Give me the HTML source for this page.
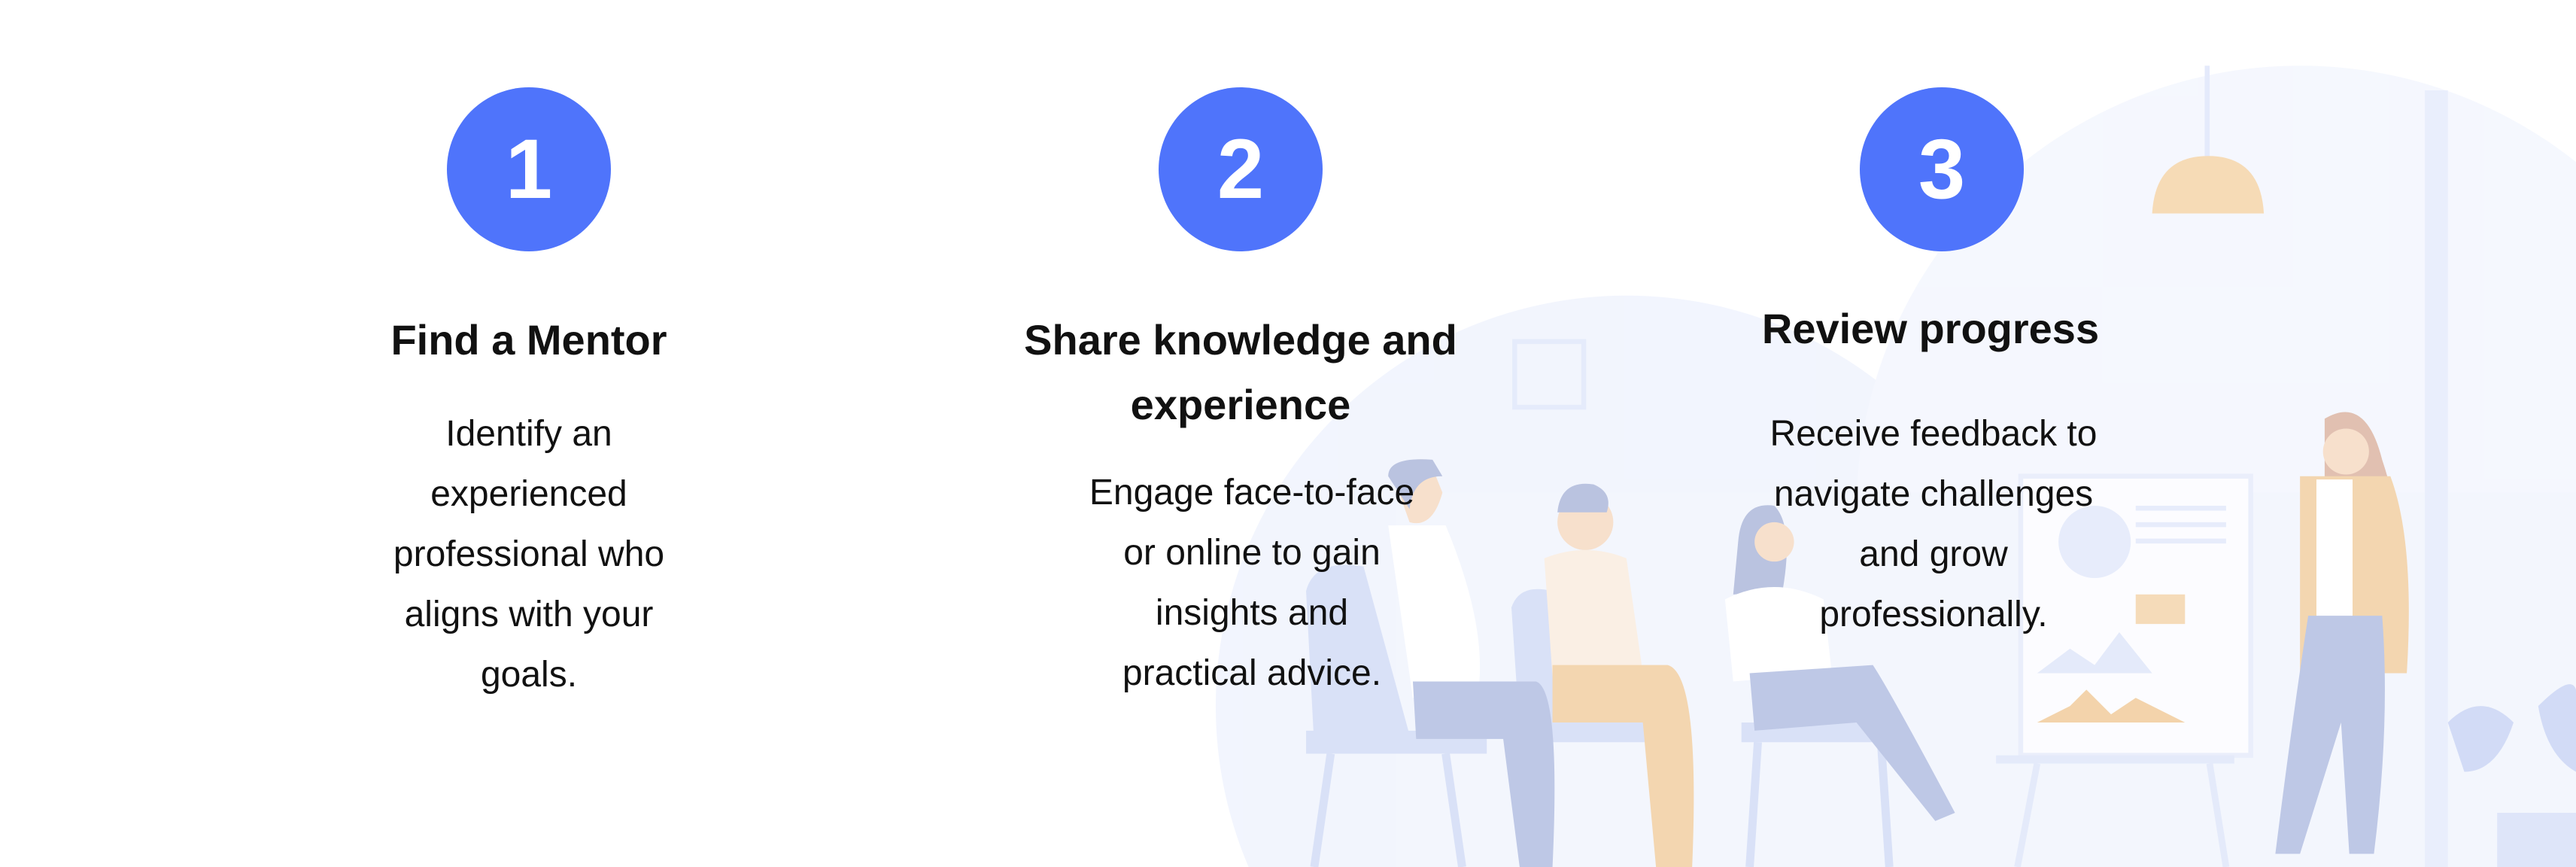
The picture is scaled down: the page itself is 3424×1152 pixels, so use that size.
<!DOCTYPE html>
<html><head><meta charset="utf-8"><style>
html,body{margin:0;padding:0;width:3424px;height:1152px;overflow:hidden;}
body{position:relative;background:#fff;font-family:"Liberation Sans",sans-serif;color:#111;}
svg.bg{position:absolute;left:0;top:0;width:3424px;height:1152px;display:block;}
.c{position:absolute;width:218px;height:218px;border-radius:50%;background:#4f74fb;color:#fff;font-weight:bold;font-size:112px;line-height:218px;text-align:center;}
.t{position:absolute;width:800px;text-align:center;}
.h{font-weight:bold;font-size:56px;line-height:86px;}
.b{font-size:48px;line-height:80px;}
</style></head><body>
<svg class="bg" viewBox="0 0 1568 528" preserveAspectRatio="none">
<g opacity="0.75">
<circle cx="990" cy="430" r="250" fill="#eef2fd"/>
<circle cx="1400" cy="310" r="270" fill="#f2f5fe"/>
<rect x="850" y="300" width="718" height="228" fill="#eff3fd"/>
<rect x="1476" y="55" width="14" height="473" fill="#e2e9fb"/>
<rect x="1342" y="40" width="3" height="58" fill="#dbe3fa"/>
<path d="M1310 130 Q1312 95 1344 95 Q1376 95 1378 130 Z" fill="#f4cf9e"/>
<rect x="922" y="208" width="42" height="40" fill="none" stroke="#dde5fa" stroke-width="3"/>
<rect x="1230" y="290" width="140" height="170" fill="#fbfcff" stroke="#e3e9fa" stroke-width="3"/>
<circle cx="1275" cy="330" r="22" fill="#dfe6fa"/>
<rect x="1300" y="308" width="55" height="3" fill="#dfe6fa"/><rect x="1300" y="318" width="55" height="3" fill="#dfe6fa"/><rect x="1300" y="328" width="55" height="3" fill="#dfe6fa"/>
<rect x="1300" y="362" width="30" height="18" fill="#f2cfa2"/>
<path d="M1240 410 L1260 395 L1275 405 L1290 385 L1310 410 Z" fill="#dce4f9"/>
<path d="M1240 440 L1260 430 L1270 420 L1285 435 L1300 425 L1330 440 Z" fill="#f0c590"/>
<rect x="1215" y="460" width="145" height="5" fill="#dbe3f9"/>
<line x1="1240" y1="465" x2="1228" y2="528" stroke="#dbe3f9" stroke-width="4"/>
<line x1="1345" y1="465" x2="1355" y2="528" stroke="#dbe3f9" stroke-width="4"/>
<path d="M795 360 Q800 340 830 345 L860 455 L800 455 Z" fill="#cdd8f5"/>
<rect x="795" y="445" width="110" height="14" fill="#cdd8f5"/>
<line x1="810" y1="459" x2="800" y2="528" stroke="#cdd8f5" stroke-width="5"/>
<line x1="880" y1="459" x2="890" y2="528" stroke="#cdd8f5" stroke-width="5"/>
<path d="M920 370 Q925 355 945 360 L965 445 L925 445 Z" fill="#cdd8f5"/>
<rect x="920" y="440" width="100" height="12" fill="#cdd8f5"/>
<line x1="935" y1="452" x2="928" y2="528" stroke="#cdd8f5" stroke-width="5"/>
<line x1="1005" y1="452" x2="1012" y2="528" stroke="#cdd8f5" stroke-width="5"/>
<rect x="1060" y="440" width="100" height="12" fill="#cdd8f5"/>
<line x1="1070" y1="452" x2="1065" y2="528" stroke="#cdd8f5" stroke-width="5"/>
<line x1="1145" y1="452" x2="1150" y2="528" stroke="#cdd8f5" stroke-width="5"/>
<path d="M848 290 Q850 278 870 280 L878 300 Q872 322 858 318 Z" fill="#f5d6bb"/>
<path d="M845 290 Q845 278 872 280 L878 290 Q860 290 858 310 Z" fill="#a3afd6"/>
<path d="M845 320 L880 320 Q905 380 900 420 L860 425 Z" fill="#ffffff"/>
<path d="M860 415 L935 415 Q950 420 945 528 L925 528 L915 450 L862 450 Z" fill="#a9b6de"/>
<circle cx="965" cy="318" r="17" fill="#f5d6bb"/>
<path d="M948 312 Q950 292 970 295 Q982 300 978 312 L965 312 Z" fill="#a3afd6"/>
<path d="M940 340 Q965 330 990 340 L1000 410 L945 412 Z" fill="#f9eadb"/>
<path d="M945 405 L1015 405 Q1035 410 1030 528 L1008 528 L1000 440 L945 440 Z" fill="#f0c996"/>
<path d="M1058 330 Q1060 305 1080 308 Q1092 320 1085 360 L1055 362 Z" fill="#a3afd6"/>
<circle cx="1080" cy="330" r="12" fill="#f5d6bb"/>
<path d="M1050 365 Q1080 350 1110 365 L1115 410 L1055 415 Z" fill="#ffffff"/>
<path d="M1065 410 L1140 405 Q1150 420 1190 495 L1178 500 L1130 440 L1068 445 Z" fill="#a9b6de"/>
<path d="M1415 255 Q1440 240 1450 280 Q1460 310 1462 340 L1415 320 Z" fill="#d7ab98"/>
<circle cx="1428" cy="275" r="14" fill="#f5d6bb"/>
<path d="M1400 290 L1455 290 Q1470 330 1465 410 L1400 410 Z" fill="#f0c996"/>
<rect x="1410" y="292" width="22" height="90" fill="#ffffff"/>
<path d="M1405 375 L1450 375 Q1455 440 1445 520 L1430 520 L1425 440 L1400 520 L1385 520 Q1395 440 1405 375 Z" fill="#a9b6de"/>
<path d="M1490 440 Q1510 420 1530 440 Q1520 470 1500 470 Z" fill="#c3d0f3"/>
<path d="M1545 430 Q1565 410 1568 420 L1568 470 Q1550 460 1545 430 Z" fill="#c3d0f3"/>
<rect x="1520" y="495" width="48" height="33" fill="#d3ddf7"/>
</g>
</svg>

<div class="c" style="left:594px;top:116px;">1</div>
<div class="c" style="left:1540px;top:116px;">2</div>
<div class="c" style="left:2472px;top:116px;">3</div>

<div class="t h" style="left:303px;top:409px;">Find a Mentor</div>
<div class="t b" style="left:303px;top:537px;">Identify an<br>experienced<br>professional who<br>aligns with your<br>goals.</div>

<div class="t h" style="left:1249px;top:409px;">Share knowledge and<br>experience</div>
<div class="t b" style="left:1264px;top:615px;">Engage face-to-face<br>or online to gain<br>insights and<br>practical advice.</div>

<div class="t h" style="left:2166px;top:394px;">Review progress</div>
<div class="t b" style="left:2170px;top:537px;">Receive feedback to<br>navigate challenges<br>and grow<br>professionally.</div>
</body></html>
